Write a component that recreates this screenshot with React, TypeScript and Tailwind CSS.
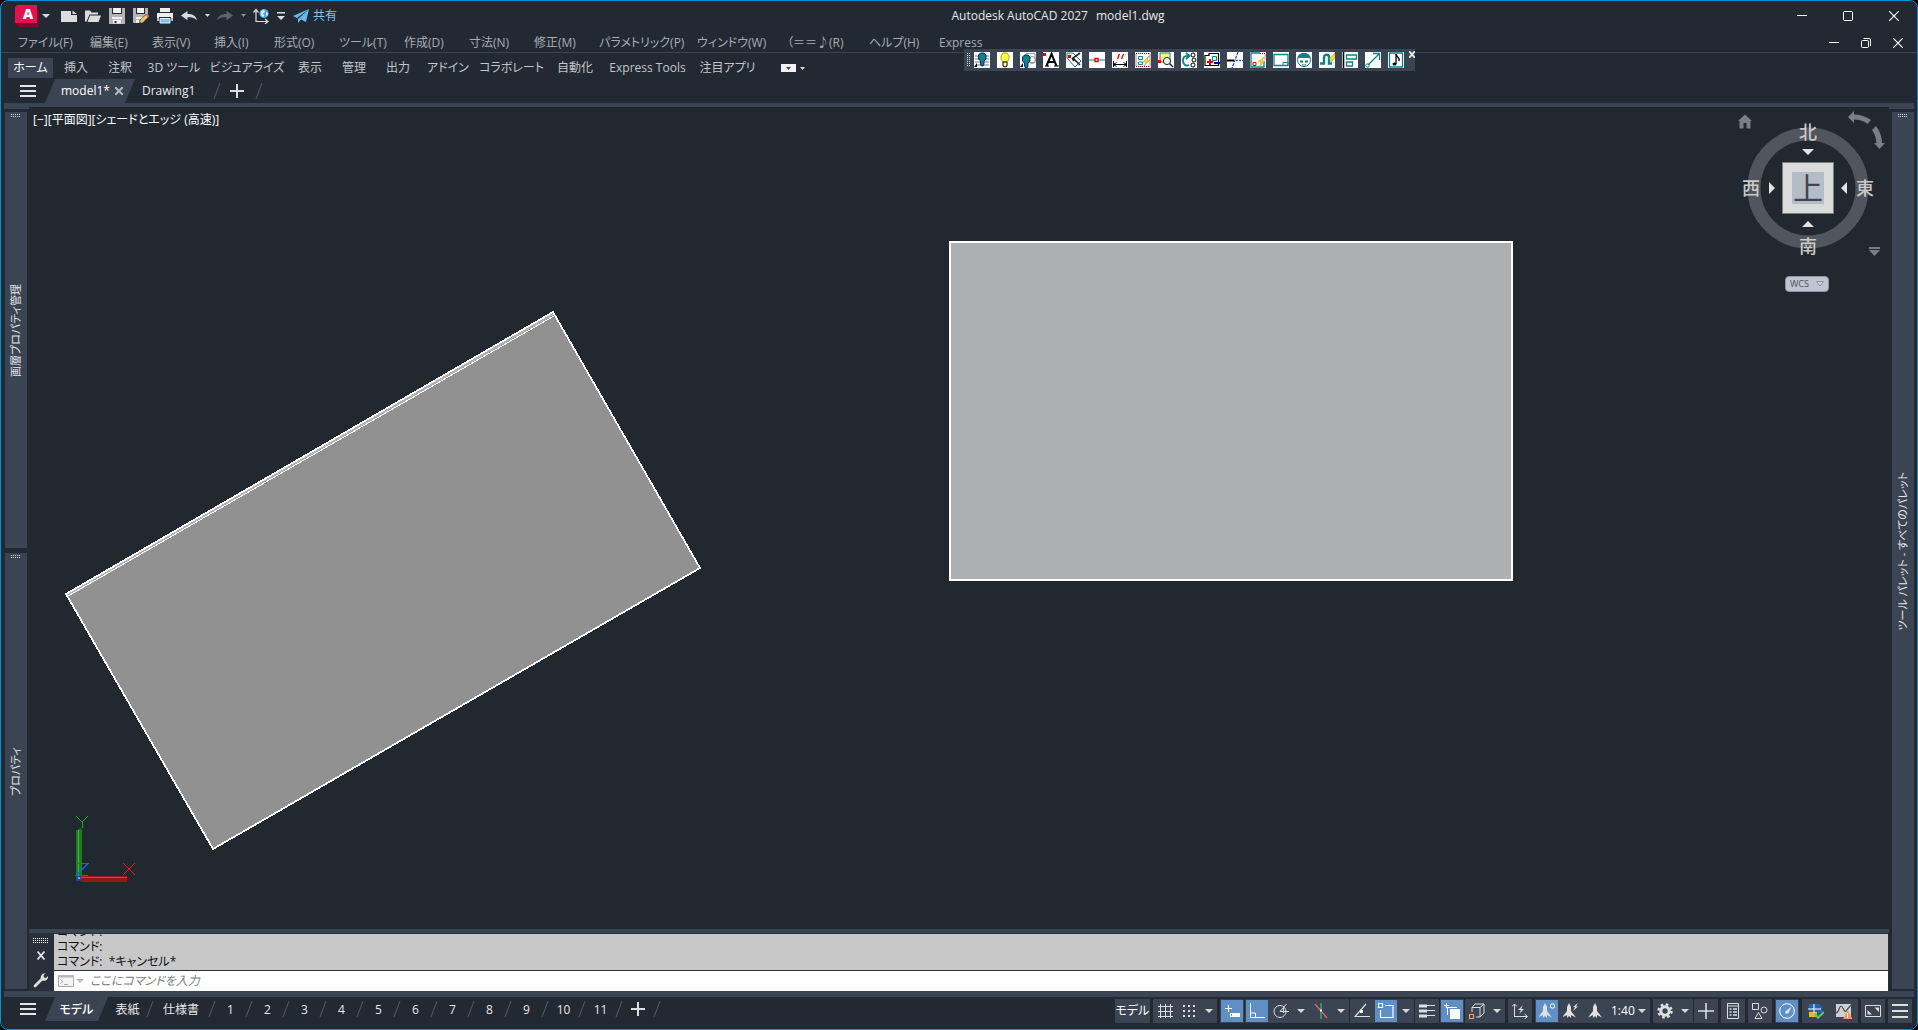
import React from 'react';

type Kids = { children?: React.ReactNode };

const Ico = ({ children, size = 16, className = '' }: Kids & { size?: number; className?: string }) => (
    <svg width={size} height={size} viewBox="0 0 16 16" fill="none" className={className} aria-hidden="true">
        {children}
    </svg>
);

const Caret = ({ className = 'text-[#d9d9d9]' }: { className?: string }) => (
    <svg width="8" height="4" viewBox="0 0 8 4" className={className} aria-hidden="true">
        <path d="M0 0h8L4 4z" fill="currentColor" />
    </svg>
);

const Burger = () => (
    <svg width="16" height="12" viewBox="0 0 16 12" aria-hidden="true">
        <path d="M0 1h16M0 6h16M0 11h16" stroke="#e4e4e4" strokeWidth="2" />
    </svg>
);

const PlusIcon = () => (
    <svg width="14" height="14" viewBox="0 0 14 14" aria-hidden="true">
        <path d="M7 0v14M0 7h14" stroke="#dedede" strokeWidth="2" />
    </svg>
);

const Slash = () => (
    <svg width="8" height="16" viewBox="0 0 8 16" className="shrink-0" aria-hidden="true">
        <path d="M1 16L7 0" stroke="#4a5262" strokeWidth="1.2" />
    </svg>
);

const Grip = ({ cols = 5, rows = 2, color = '#d5d8dc' }: { cols?: number; rows?: number; color?: string }) => (
    <svg width={cols * 2} height={rows * 2} shapeRendering="crispEdges" aria-hidden="true">
        {Array.from({ length: cols * rows }, (_, i) => (
            <rect key={i} x={(i % cols) * 2} y={Math.floor(i / cols) * 2} width="1" height="1" fill={color} />
        ))}
    </svg>
);

/* ---------- title bar ---------- */

const QUICK_ACCESS = [
    {
        name: '新規作成',
        icon: <path d="M-.5 3H10v4h6v7H-.5zM11.500 2.500l4.500 3.500h-4.500z" fill="#dcdcdc" />,
    },
    {
        name: '開く',
        icon: (
            <path d="M0 2.500h5l1.500 2H13v2H4.500L1.500 13.500H0zM5 7.500h11l-2.500 6.500H2.500z" fill="#dcdcdc" />
        ),
    },
    {
        name: '上書き保存',
        icon: (
            <>
                <path d="M0 0h3v6h10V0h3v16H0z" fill="#b4b4b4" />
                <path d="M4 0h8v5H4zM3 9h10v2H3zM4 12h8v3.500H4z" fill="#f2f2f2" />
                <path d="M5.500 13h2v2h-2z" fill="#222933" />
            </>
        ),
    },
    {
        name: '名前を付けて保存',
        icon: (
            <>
                <path d="M0 0h3v6h9V0h3v7L7 15H0z" fill="#b4b4b4" />
                <path d="M4 0h7v5H4zM3 9h7v2H3zM3 12h3v3H3z" fill="#f2f2f2" />
                <path d="M7 12l6-5.500 2.500 2.500-6 6H7z" fill="#f3c46b" stroke="#222933" strokeWidth=".6" />
                <path d="M12.500 7L14 5.500l2.500 2.500-1.500 1.500z" fill="#e8685e" />
            </>
        ),
    },
    {
        name: '印刷',
        icon: (
            <>
                <path d="M3 0h10v4H3zM0 5h16v7h-2V9H2v3H0z" fill="#eeeeee" />
                <path d="M0 10h2v3H0zM14 10h2v3h-2z" fill="#b4b4b4" />
                <path d="M3 10.500h10V15H3z" fill="#7cc3f5" stroke="#eee" />
            </>
        ),
    },
];

const UndoPath = ({ fill }: { fill: string }) => (
    <path d="M0 7.500L6.500 3v3c5 0 8.500 1.500 9.500 6.500C13.500 9.700 11 9.300 6.500 9.300v3z" fill={fill} />
);

const TitleBar = () => (
    <header className="flex h-[29px] shrink-0 items-center">
        <button aria-label="アプリケーション メニュー" className="ml-[14px] flex h-full w-[42px] items-center gap-[3px]">
            <svg width="24" height="22" viewBox="0 0 24 22" aria-hidden="true">
                <path d="M3 5h21v17H4l-4-3z" fill="#7d0a2b" />
                <path d="M0 2l2-2h20v18H0z" fill="#e51050" />
                <text x="13" y="14" textAnchor="middle" fontFamily="Open Sans" fontSize="14" fontWeight="800" fill="#fff">A</text>
            </svg>
            <Caret />
        </button>
        {QUICK_ACCESS.map((q) => (
            <button key={q.name} aria-label={q.name} className="flex h-6 w-6 items-center justify-center">
                <Ico>{q.icon}</Ico>
            </button>
        ))}
        <button aria-label="元に戻す" className="flex h-6 w-6 items-center justify-center"><Ico><UndoPath fill="#dcdcdc" /></Ico></button>
        <button aria-label="元に戻す履歴" className="flex h-6 w-3 items-center justify-center"><svg width="5" height="3" aria-hidden="true"><path d="M0 0h5L2.500 3z" fill="#dcdcdc" /></svg></button>
        <button aria-label="やり直し" className="flex h-6 w-6 items-center justify-center"><Ico className="-scale-x-100"><UndoPath fill="#5c636e" /></Ico></button>
        <button aria-label="やり直し履歴" className="flex h-6 w-3 items-center justify-center"><svg width="5" height="3" aria-hidden="true"><path d="M0 0h5L2.500 3z" fill="#8b9098" /></svg></button>
        <button aria-label="UCS" className="flex h-6 w-6 items-center justify-center">
            <Ico>
                <path d="M3 14V2M0.500 4.500L3 1.500l2.500 3M3 13.500h12M12 11l3 2.500-3 2.500" stroke="#dcdcdc" strokeWidth="1.2" />
                <circle cx="11" cy="5.500" r="4.600" fill="#4aa8e8" />
                <path d="M8 3l3-1.500 1 2-2 2 1.500 2.500-1.500 1C8 8 7 6 8 3zM13 4l2 1-.5 3-1.500-1z" fill="#d8effd" />
            </Ico>
        </button>
        <button aria-label="クイック アクセス ツールバーをカスタマイズ" className="flex h-6 w-4 items-center justify-center">
            <svg width="8" height="8" aria-hidden="true"><path d="M0 0h8v1.500H0zM0 4h8L4 8z" fill="#dcdcdc" /></svg>
        </button>
        <button className="flex h-6 items-center gap-1 pl-1 text-xs text-[#7cc3f5]">
            <Ico>
                <path d="M16 1L0 8l4 2zM16 1L5 11v4l2.500-3zM16 1l-3 13-5-2.500z" fill="#69b9ee" />
            </Ico>
            共有
        </button>
        <h1 className="flex flex-1 justify-center gap-2 text-xs text-[#e8e8e8]">
            <span>Autodesk AutoCAD 2027</span>
            <span>model1.dwg</span>
        </h1>
        <button aria-label="最小化" className="flex h-full w-[46px] items-center justify-center">
            <svg width="10" height="10" aria-hidden="true"><path d="M0 4.500h10" stroke="#fff" /></svg>
        </button>
        <button aria-label="最大化" className="flex h-full w-[46px] items-center justify-center">
            <svg width="10" height="10" aria-hidden="true"><rect x=".5" y=".5" width="9" height="9" rx="1" stroke="#fff" fill="none" /></svg>
        </button>
        <button aria-label="閉じる" className="flex h-full w-[46px] items-center justify-center">
            <svg width="10" height="10" aria-hidden="true"><path d="M0 0l10 10M10 0L0 10" stroke="#fff" strokeWidth="1.2" /></svg>
        </button>
    </header>
);

/* ---------- menus and tabs ---------- */

const MENUS = [
    { label: 'ファイル(F)', w: 'w-[72px]' },
    { label: '編集(E)', w: 'w-[62px]' },
    { label: '表示(V)', w: 'w-[62px]' },
    { label: '挿入(I)', w: 'w-[60px]' },
    { label: '形式(O)', w: 'w-[65px]' },
    { label: 'ツール(T)', w: 'w-[65px]' },
    { label: '作成(D)', w: 'w-[65px]' },
    { label: '寸法(N)', w: 'w-[65px]' },
    { label: '修正(M)', w: 'w-[65px]' },
    { label: 'パラメトリック(P)', w: 'w-[98px]' },
    { label: 'ウィンドウ(W)', w: 'w-[90px]' },
    { label: '（＝＝♪(R)', w: 'w-[82px]' },
    { label: 'ヘルプ(H)', w: 'w-[70px]' },
    { label: 'Express', w: 'w-[60px]' },
];

const MenuBar = () => (
    <nav className="flex h-[23px] shrink-0 items-center border-b border-[#3b4453] pt-[3px] pr-[3px] pl-[17px] text-xs text-[#a9adb3]">
        {MENUS.map((m) => (
            <button key={m.label} className={`${m.w} shrink-0 text-left whitespace-nowrap`}>{m.label}</button>
        ))}
        <div className="ml-auto flex h-full">
            <button aria-label="図面を最小化" className="flex w-8 items-center justify-center">
                <svg width="10" height="10" aria-hidden="true"><path d="M0 4.500h10" stroke="#fff" /></svg>
            </button>
            <button aria-label="図面を元に戻す" className="flex w-8 items-center justify-center">
                <svg width="10" height="10" fill="none" aria-hidden="true">
                    <rect x=".5" y="2.500" width="7" height="7" rx="1" stroke="#fff" />
                    <path d="M2.500.5H8a1.500 1.500 0 011.500 1.500v6" stroke="#fff" />
                </svg>
            </button>
            <button aria-label="図面を閉じる" className="flex w-8 items-center justify-center">
                <svg width="10" height="10" aria-hidden="true"><path d="M0 0l10 10M10 0L0 10" stroke="#fff" strokeWidth="1.2" /></svg>
            </button>
        </div>
    </nav>
);

const RIBBON_TABS = [
    { label: '挿入', w: 'w-11' },
    { label: '注釈', w: 'w-11' },
    { label: '3D ツール', w: 'w-16' },
    { label: 'ビジュアライズ', w: 'w-[82px]' },
    { label: '表示', w: 'w-11' },
    { label: '管理', w: 'w-11' },
    { label: '出力', w: 'w-11' },
    { label: 'アドイン', w: 'w-14' },
    { label: 'コラボレート', w: 'w-[71px]' },
    { label: '自動化', w: 'w-14' },
    { label: 'Express Tools', w: 'w-[89px]' },
    { label: '注目アプリ', w: 'w-[71px]' },
];

const RibbonTabs = () => (
    <nav className="flex h-[26px] shrink-0 items-center pt-1 pl-[7px] text-xs text-[#c3c6ca]">
        <button className="mr-[1px] h-5 w-[45px] shrink-0 bg-[#3b4453] text-white">ホーム</button>
        {RIBBON_TABS.map((t) => (
            <button key={t.label} className={`${t.w} shrink-0 text-center whitespace-nowrap`}>{t.label}</button>
        ))}
        <button aria-label="リボンを最小化" className="ml-[18px] flex h-2 w-[15px] items-center justify-center bg-[#f2f2f2]">
            <svg width="5" height="3" aria-hidden="true"><path d="M0 0h5L2.500 3z" fill="#444" /></svg>
        </button>
        <button aria-label="リボン オプション" className="ml-1 flex h-2 w-[5px] items-center">
            <svg width="5" height="3" aria-hidden="true"><path d="M0 0h5L2.500 3z" fill="#dcdcdc" /></svg>
        </button>
    </nav>
);

const FileTabs = () => (
    <nav className="flex h-6 shrink-0 items-center text-xs text-[#e8e8e8]">
        <button aria-label="ファイル タブ メニュー" className="ml-[19px] w-4"><Burger /></button>
        <div className="ml-[9px] flex h-6 w-[90px] items-center bg-[#3b4453] pl-4 [clip-path:polygon(10px_0,100%_0,calc(100%-10px)_100%,0_100%)]">
            <button className="font-medium text-white">model1*</button>
            <button aria-label="model1 を閉じる" className="mr-3 ml-auto text-[#b4b8be]">
                <svg width="8" height="8" aria-hidden="true"><path d="M0 0l8 8M8 0L0 8" stroke="currentColor" strokeWidth="2" /></svg>
            </button>
        </div>
        <button className="ml-[7px] w-[71px] text-left">Drawing1</button>
        <Slash />
        <button aria-label="新しい図面" className="mr-[11px] ml-[9px]"><PlusIcon /></button>
        <Slash />
    </nav>
);

/* ---------- floating tool bar ---------- */

const Bulb = ({ fill = '#0b8484' }: { fill?: string }) => (
    <path d="M4.500 3l2-2h3.500l2 2v4l-2 2v3l-1 2H7.500l-1-2V9l-2-2z" fill={fill} stroke="#00006b" strokeWidth=".8" />
);

const TOOLS = [
    { name: '画層をオフ', icon: <><path d="M1 4h14M1 7h14M1 10h14M3 13h12" stroke="#777" /><Bulb /><path d="M0 15l3-4v4z" fill="#000" /></> },
    { name: '全画層オン', icon: <><path d="M4 4l2-3h4l2 3v3l-2 3H6L4 7z" fill="#ffff4d" stroke="#b0a800" /><path d="M6 10h4v4l-2 1-2-1z" fill="#ffffa0" stroke="#000" /></> },
    { name: '画層選択表示', icon: <><path d="M6 1.500h9v9H6z" stroke="#999" /><circle cx="12" cy="8" r="3.500" stroke="#999" /><g transform="translate(-2 2)"><Bulb /></g><path d="M0 15l3-4v4z" fill="#000" /></> },
    { name: '文字', icon: <><path d="M3.500 14L8.500 2l5 12M5 10h7" stroke="#000" strokeWidth="2" /><path d="M2 14h4M11 14h5" stroke="#000" /><path d="M0 1h3v3H0z" fill="#e00" /></> },
    { name: '測定', icon: <><path d="M1 1h6l8 8-6 6-8-9z" stroke="#0b8484" /><path d="M14 1L7 6l7 7M6 6l2 3" stroke="#222" strokeWidth="1.600" /><path d="M2 3h3v3H2z" fill="#e00" /></> },
    { name: '中点', icon: <><path d="M0 8h16" stroke="#0b8484" /><path d="M6 6.500h3v3H6z" fill="#fff" stroke="#e00" strokeWidth="1.400" /></> },
    { name: '寸法', icon: <><path d="M1.500 9v6M14.500 9v6M2 12.500h12M4.500 10.500l-3 2 3 2M11.500 10.500l3 2-3 2" stroke="#000" /><path d="M5.500 7l2-5M9.500 7l2-5" stroke="#e00" strokeWidth="1.300" /></> },
    { name: '選択', icon: <><rect x="1" y="1.500" width="14" height="13" stroke="#900" strokeDasharray="1 1" /><path d="M3.500 4.500h4v3h-4zM3.500 10h4v2.500h-4z" stroke="#0b8484" /><path d="M15 3l-7 7h3l-2 4 6-6h-3z" fill="#f5e400" stroke="#888" strokeWidth=".4" /></> },
    { name: 'ズーム', icon: <><path d="M2 1h10v9H2z" fill="#fff37a" stroke="#0b8484" /><circle cx="9" cy="9" r="3.600" fill="#e8f4f4" stroke="#222" /><path d="M11.500 11.500L15 15" stroke="#222" strokeWidth="1.500" /><path d="M0 8h3v3H0z" fill="#e00" /></> },
    { name: '回転', icon: <><path d="M8 4C3 3 1.500 6 2 9.500s3.500 5 6 3.500M5 1l3.500 3L5 7" stroke="#0b8484" strokeWidth="1.800" /><circle cx="12" cy="3" r="2" stroke="#000" /><circle cx="13" cy="8" r="2" stroke="#000" /><circle cx="12" cy="13" r="2" stroke="#000" /></> },
    { name: 'ブロック', icon: <><path d="M1 13.500V3.500h4v-2h9.500v12z" stroke="#000" strokeWidth="1.200" /><path d="M8.500 4.500h4v4h-4z" stroke="#0b8484" /><path d="M6 7v6M3 10h6" stroke="#e00" strokeWidth="2" /><path d="M10 11h6" stroke="#00c" strokeWidth="2" /></> },
    { name: 'トリム', icon: <><path d="M0 8.500h7" stroke="#000" strokeWidth="2" /><path d="M9 8.500h7" stroke="#0b8484" strokeDasharray="2 1" strokeWidth="1.500" /><path d="M11 0L5 16" stroke="#00c" strokeDasharray="3 1" /></> },
    { name: '編集', icon: <><path d="M10 1H1v14h13V9" stroke="#0b8484" strokeWidth="1.300" /><path d="M10 1.500h5V8" stroke="#e00" strokeDasharray="1 1" /><path d="M14 5l-6 5h3l-2 5 6-6h-3z" fill="#f5e400" stroke="#888" strokeWidth=".4" /><path d="M3 10.500h3v3H3z" stroke="#e00" /></> },
    { name: 'ビューポート', icon: <><path d="M1 2.500h14v11H1z" stroke="#0b8484" strokeWidth="1.300" /><path d="M10 10.500h5v3h-5z" stroke="#0b8484" /></> },
    { name: 'ロボット', icon: <><circle cx="8" cy="8" r="6.500" fill="#fff" stroke="#0b8484" /><path d="M1.500 6a6.500 5 0 0113 0z" fill="#0b8484" /><path d="M4 8.500h3v2H4zM9 8.500h3v2H9z" fill="#0b8484" /><path d="M6 13h4" stroke="#0b8484" /></> },
    { name: 'スナップ', icon: <><path d="M1 11.500h4V5c0-3 5-3 5 0v6.500h3" stroke="#0b8484" strokeWidth="2.400" /><path d="M16 1l-6 6h3l-2 4 5-5z" fill="#f5e400" stroke="#888" strokeWidth=".4" /></> },
    { name: '位置合わせ', icon: <><path d="M1.500 0v16" stroke="#000" strokeWidth="1.600" /><path d="M4.500 3h10v4h-10zM4.500 10h6v4h-6z" stroke="#0b8484" strokeWidth="1.300" /></> },
    { name: '引出', icon: <><path d="M3 13L14 2M8 1.500h6.500V8" stroke="#0b8484" strokeWidth="1.300" /><circle cx="2.500" cy="13.500" r="1.700" stroke="#0b8484" /></> },
    { name: '音符', icon: <><path d="M1.500 1v14h13V1z" stroke="#0b8484" strokeWidth="1.300" /><path d="M8 12V2c0 3 4 3 3 7" stroke="#000" strokeWidth="1.300" /><ellipse cx="6.500" cy="12" rx="2" ry="1.600" fill="#000" /></> },
];

const FloatingTools = () => (
    <div role="toolbar" className="absolute top-12 left-[963px] flex h-[22px] w-[451px] items-center bg-[#3b4453]">
        <span className="mr-[3px] ml-[3px]"><Grip cols={2} rows={7} /></span>
        <div className="mb-px flex gap-[7px]">
            {TOOLS.map((t) => (
                <button key={t.name} aria-label={t.name} className="h-4 w-4 bg-white">
                    <Ico>{t.icon}</Ico>
                </button>
            ))}
        </div>
        <button aria-label="ツールバーを閉じる" className="mt-0.5 ml-auto self-start">
            <svg width="6" height="7" aria-hidden="true"><path d="M0 0l6 7M6 0L0 7" stroke="#e8e8e8" strokeWidth="1.800" /></svg>
        </button>
    </div>
);

/* ---------- workspace ---------- */

const Palette = ({ title }: { title: string }) => (
    <aside className="flex w-[22px] flex-1 flex-col items-center bg-[#3b4453] pt-0.5">
        <Grip />
        <div className="flex flex-1 items-center pb-1">
            <button className="rotate-180 text-[11px] leading-4 whitespace-nowrap text-[#e4e6e8] [text-orientation:sideways] [writing-mode:vertical-rl]">
                {title}
            </button>
        </div>
    </aside>
);

const Compass = ({ x, y, children }: { x: number; y: number; children: string }) => (
    <text x={x} y={y} textAnchor="middle" fontSize="18" fontWeight="500" fill="#c9cac6">{children}</text>
);

const ViewCube = () => (
    <div className="absolute top-0 right-0 w-[154px]">
        <svg width="154" height="164" viewBox="0 0 154 164" fill="none" aria-label="ViewCube">
            <circle cx="73" cy="81" r="54" stroke="#50555e" strokeWidth="13" />
            <path d="M10 7.500l7 6.500h-1.500v7.500h-4V16h-3v5.500h-4V14H3z" fill="#7b7e83" />
            <path d="M113 10l6-6v3.500c6 0 12 2 17 5.500l-3.500 4C129 14 125 12.500 119 12.500V16z" fill="#7b7e83" />
            <path d="M141 19l-4 4c3 4 4 8 4.500 13H139l5.500 6 5.500-6h-3c0-6-2-12-6-17z" fill="#7b7e83" />
            <path d="M134 140h11v2h-11zM134 143h11l-5.500 6z" fill="#7b7e83" />
            <rect x="47.500" y="55.500" width="51" height="51" fill="#dadcdb" stroke="#7f8080" />
            <rect x="57" y="65" width="32" height="32" fill="#b4bcc8" />
            <text x="73" y="92" textAnchor="middle" fontSize="30" fill="#3f4650">上</text>
            <path d="M67 42h12l-6 6zM67 120h12l-6-6zM34 75v12l6-6zM112 75v12l-6-6z" fill="#e3e3e3" />
            <Compass x={73} y={32}>北</Compass>
            <Compass x={73} y={146}>南</Compass>
            <Compass x={16} y={88}>西</Compass>
            <Compass x={130} y={88}>東</Compass>
        </svg>
        <button className="mt-[5px] ml-[50px] flex h-4 w-11 items-center justify-between rounded border border-[#9093a3] bg-[#c0c3d2] px-1 text-[9px] leading-3 text-[#4d515c]">
            WCS
            <svg width="8" height="6" aria-hidden="true"><path d="M.5.5h7L4 5z" fill="#d4d6e0" stroke="#8a8d9a" /></svg>
        </button>
    </div>
);

const Drawing = () => (
    <svg className="absolute inset-0 h-full w-full" fill="none" aria-label="model1">
        <g shapeRendering="crispEdges">
            <path d="M524 205L671 461L184 742L37 487z" fill="#919191" />
            <path d="M524 205L37 487l2 3 486-282z" fill="#b0b0b0" />
            <path d="M39 489L525 209" stroke="#fff" />
            <path d="M524 205L671 461L184 742L37 487z" stroke="#fff" strokeWidth="1.800" />
        </g>
        <rect x="921" y="135" width="562" height="338" fill="#aeafb1" stroke="#fff" strokeWidth="2" />
        <g shapeRendering="crispEdges">
            <path d="M47 723h6v49h-6z" fill="#1d7d1d" />
            <path d="M49 723h1v49h-1z" fill="#4db04d" />
            <path d="M48 723l2-2h1l2 2z" fill="#1a641a" />
            <path d="M52 769h46v6H52z" fill="#941818" />
            <path d="M52 770h46v1H52z" fill="#c94444" />
            <path d="M98 769l3 3-3 3z" fill="#6d1010" />
            <path d="M47 768h5v6h-5z" fill="#1747a0" />
            <path d="M49 770h2v2h-2z" fill="#69a5ff" />
        </g>
        <g shapeRendering="crispEdges">
            <path d="M47 709l6 6 6-6M53.500 715v6" stroke="#14b014" />
            <path d="M94 756l12 12M106 756l-12 12" stroke="#e81e1e" />
            <path d="M47 756.500h12L47 768.500h12" stroke="#1264e8" />
        </g>
    </svg>
);

const CommandLine = () => (
    <section className="flex h-[62px] shrink-0 border-t-4 border-[#3b4453] bg-[#292f3b]">
        <div className="mr-px flex w-6 flex-col items-center pt-[5px]">
            <Grip cols={8} rows={3} color="#ffffff" />
            <button aria-label="コマンド ラインを閉じる" className="mt-[7px]">
                <svg width="8" height="9" aria-hidden="true"><path d="M.5.5l7 8M7.500.5l-7 8" stroke="#e0e0e0" strokeWidth="1.800" /></svg>
            </button>
            <button aria-label="カスタマイズ" className="mt-3">
                <Ico>
                    <path d="M2 14l7-7" stroke="#e0e0e0" strokeWidth="2.800" strokeLinecap="round" />
                    <path d="M8 7.500C7 4 9 1 12.500 1.200L10.500 3.500l.5 2 2 .5L15 4c.5 3.500-2.500 5.500-6 4.500z" fill="#e0e0e0" />
                </Ico>
            </button>
        </div>
        <div className="flex min-w-0 flex-1 flex-col pt-px pr-px text-xs">
            <div className="flex h-[37px] flex-col justify-end overflow-hidden bg-[#c8c8c8] pb-px pl-[3px] leading-[15px] text-[#111]">
                <p className="shrink-0">コマンド:</p>
                <p className="shrink-0">コマンド:</p>
                <p className="shrink-0">コマンド: &nbsp;*キャンセル*</p>
            </div>
            <div className="mt-px flex h-5 items-center bg-white pl-1">
                <button aria-label="最近使用したコマンド" className="flex items-center gap-0.5">
                    <svg width="16" height="12" viewBox="0 0 16 12" fill="none" aria-hidden="true">
                        <path d="M.5.5h15v11H.5z" fill="#f4f4f4" stroke="#a9a9a9" />
                        <path d="M0 0h16v2.500H0z" fill="#b9b9b9" />
                        <path d="M2.500 4.500l2.500 2-2.500 2M6 9.500h4" stroke="#a9a9a9" />
                    </svg>
                    <Caret className="text-[#b9b9b9]" />
                </button>
                <input
                    aria-label="コマンド"
                    placeholder="ここにコマンドを入力"
                    className="ml-1.5 min-w-0 flex-1 bg-transparent italic outline-none placeholder:text-[#808080]"
                />
            </div>
        </div>
    </section>
);

/* ---------- bottom bar ---------- */

const LAYOUTS = ['1', '2', '3', '4', '5', '6', '7', '8', '9', '10', '11'];

const LayoutTabs = () => (
    <nav className="flex h-6 items-center text-xs text-[#e8e8e8]">
        <button aria-label="レイアウト メニュー" className="ml-[19px] w-4"><Burger /></button>
        <button className="ml-[9px] h-6 w-[63px] bg-[#3b4453] pt-0.5 text-center font-medium text-white [clip-path:polygon(10px_0,100%_0,calc(100%-10px)_100%,0_100%)]">
            モデル
        </button>
        <button className="ml-px w-[37px] pt-0.5 text-center whitespace-nowrap">表紙</button>
        <Slash />
        <button className="w-[54px] pt-0.5 text-center whitespace-nowrap">仕様書</button>
        <Slash />
        {LAYOUTS.map((n) => (
            <React.Fragment key={n}>
                <button className="w-[29px] pt-0.5 text-center">{n}</button>
                <Slash />
            </React.Fragment>
        ))}
        <button aria-label="新しいレイアウト" className="mx-2"><PlusIcon /></button>
        <Slash />
    </nav>
);

const Group = ({ children }: Kids) => <div className="flex h-6 items-center bg-[#3b4453]">{children}</div>;

const Tool = ({ name, on, children }: Kids & { name: string; on?: boolean }) => (
    <button
        aria-label={name}
        aria-pressed={!!on}
        className={`flex h-6 w-6 items-center justify-center border border-[#3b4453] ${on ? 'bg-[#5f8fc4]' : ''}`}
    >
        <Ico className="shrink-0">{children}</Ico>
    </button>
);

const Drop = ({ name }: { name: string }) => (
    <button aria-label={name} className="flex h-6 w-4 items-center justify-center"><Caret /></button>
);

const S = '#dedede';

const Scale = () => <path d="M8 0l2 4v4l5 6.500-5-2.500v3L8 13l-2 2v-3l-5 2.500L6 8V4z" fill="#e0e0e0" />;

const StatusBar = () => (
    <div className="ml-auto flex gap-[3px] pt-0.5 pr-[5px] text-xs text-white">
        <Group><button className="w-[35px] text-center whitespace-nowrap">モデル</button></Group>
        <Group>
            <Tool name="グリッド"><path d="M3.500 1v14M8.500 1v14M13.500 1v14M1 3.500h15M1 8.500h15M1 13.500h15" stroke={S} /></Tool>
            <Tool name="スナップ"><path d="M2 3h12M2 8h12M2 13h12" stroke={S} strokeWidth="2" strokeDasharray="2 3" /></Tool>
            <Drop name="スナップ設定" />
        </Group>
        <div className="flex gap-px">
            <Group>
                <Tool name="ダイナミック入力" on><path d="M1 5.500h7M4.500 2v7" stroke="#fff" /><path d="M6 10h10v4H6z" fill="#fff" /><path d="M7.500 11v2" stroke="#5f8fc4" /></Tool>
            </Group>
            <Group>
                <Tool name="直交モード" on><path d="M1.500 0v14.500H16M1.500 10h5v4.500" stroke="#fff" /></Tool>
                <Tool name="極トラッキング"><circle cx="7" cy="8.500" r="6" stroke={S} /><path d="M7 8.500h9M7 8.500L13.500 1M10.500 5v5" stroke={S} /></Tool>
                <Drop name="極トラッキング設定" />
                <Tool name="アイソメ"><path d="M8 0v16" stroke="#54c878" /><path d="M2 1l5 6M9 9l5 6" stroke="#e06a6a" strokeWidth="1.200" /><path d="M7 6.500h2v2H7z" fill="#fff" /></Tool>
                <Drop name="アイソメ設定" />
            </Group>
            <Group>
                <Tool name="オブジェクト スナップ トラッキング"><path d="M12 1L1 13.500h15" stroke={S} strokeWidth="1.200" /><path d="M6 7h3v3H6z" fill="#fff" /></Tool>
                <Tool name="オブジェクト スナップ" on><path d="M7 2.500h8v12H2.500V7M.5.5h4v4h-4z" stroke="#fff" strokeWidth="1.200" /></Tool>
                <Drop name="オブジェクト スナップ設定" />
            </Group>
            <Group><Tool name="線の太さ"><path d="M0 3h8M0 8h8M0 13h8" stroke={S} strokeWidth="3" /><path d="M8 2.500h8M8 7.500h8M8 12.500h8" stroke={S} /></Tool></Group>
            <Group><Tool name="透過性" on><path d="M0 2.500h5M2.500 0v5" stroke="#fff" /><path d="M3.500 12V4.500H13" stroke="#fff" /><path d="M6 6h10v10H6z" fill="#fff" /></Tool></Group>
            <Group>
                <Tool name="3D オブジェクト スナップ"><path d="M3 9V4.500h8V14H7M3 4.500L6 1h9v9l-4 4M11 4.500L15 1" stroke={S} /><path d="M.5 11.500h4v4h-4z" stroke="#f0a070" strokeWidth="1.200" /></Tool>
                <Drop name="3D オブジェクト スナップ設定" />
            </Group>
        </div>
        <Group><Tool name="ダイナミック UCS"><path d="M2.500 14V1M0 3.500L2.500 1 5 3.500M2 13.500h13M12.500 11l3 2.500-3 2.500" stroke={S} /><path d="M11 2L6 7h3l-2 4 5-5H9z" fill={S} /></Tool></Group>
        <Group>
            <Tool name="注釈オブジェクトを表示" on><g transform="translate(-2 0)"><Scale /></g><circle cx="13.500" cy="3" r="2.200" stroke="#fff" /></Tool>
            <Tool name="尺度を追加"><g transform="translate(-2 0)"><Scale /></g><path d="M15 0l-5 4h2l-2 4 5-4.500h-2z" fill={S} /></Tool>
            <Tool name="注釈尺度"><Scale /></Tool>
            <button className="flex h-6 w-[43px] items-center justify-between px-1">1:40 <Caret /></button>
        </Group>
        <div className="flex gap-px">
            <Group>
                <Tool name="ワークスペース">
                    <circle cx="8" cy="8" r="4.200" stroke={S} strokeWidth="3" />
                    <circle cx="8" cy="8" r="6.500" stroke={S} strokeWidth="2.500" strokeDasharray="2.600 2.505" />
                </Tool>
                <Drop name="ワークスペース切り替え" />
            </Group>
            <Group><Tool name="注釈モニター"><path d="M8 0v16M0 8h16" stroke={S} strokeWidth="1.600" /></Tool></Group>
        </div>
        <Group><Tool name="クイック プロパティ"><path d="M2.500.5h11v15h-11zM2.500 3h11" stroke={S} /><path d="M4.500 6h2M8 6h4M4.500 9h2M8 9h4M4.500 12h2M8 12h4" stroke={S} strokeWidth="1.500" /></Tool></Group>
        <Group><Tool name="オブジェクトを選択表示"><path d="M.5.5h6v6h-6zM3 15.500h7L6.500 9.500z" stroke={S} /><circle cx="12" cy="7" r="3" stroke={S} /></Tool></Group>
        <Group><Tool name="グラフィックス パフォーマンス" on><circle cx="8" cy="8" r="7.300" stroke="#fff" /><path d="M12.500 3.500L9.500 10 7 11 6 9z" fill="#fff" fillOpacity=".8" /></Tool></Group>
        <Group>
            <div className="flex gap-1 px-0.5">
                <Tool name="信頼されたDWG">
                    <path d="M1 1h10l3 3v6H1z" fill="#2b63a8" />
                    <path d="M1 9h8v5H1z" fill="#f0b429" />
                    <path d="M0 6h13M6 1v9" stroke="#fff" />
                    <path d="M7 11l3 3.500 6-5.500" stroke="#58c46c" strokeWidth="2.200" />
                </Tool>
                <Tool name="アクティビティ">
                    <path d="M0 1h15v13H0z" fill="#cfd0d2" />
                    <path d="M0 10c3 0 3-7 5-7s3 7 5 5l5-6" stroke="#4a4f58" strokeWidth="1.200" />
                    <path d="M11.500 7l5 9h-9.500z" fill="#ef9a66" />
                    <path d="M11.500 10v5" stroke="#fff" />
                </Tool>
            </div>
        </Group>
        <Group><Tool name="フルスクリーン"><path d="M.5 2.500h15v11H.5z" stroke={S} /><path d="M9.500 4.500H14V9zM2.500 7v4.500H7z" fill={S} /></Tool></Group>
        <Group><Tool name="カスタマイズ"><path d="M0 2h16M0 8h16M0 14h16" stroke={S} strokeWidth="1.800" /></Tool></Group>
    </div>
);

export default function App() {
    return (
        <div className="h-screen bg-black font-['Open_Sans','Noto_Sans_CJK_JP',sans-serif] [font-feature-settings:'palt']">
            <div className="relative flex h-full flex-col overflow-hidden rounded-lg border border-[#0b8fd0] bg-[#222933]">
                <TitleBar />
                <MenuBar />
                <RibbonTabs />
                <FileTabs />
                <FloatingTools />
                <div className="mx-[3px] h-1 shrink-0 bg-[#3b4453]" />
                <main className="mx-[3px] flex min-h-0 flex-1">
                    <div className="flex w-[25px] shrink-0 flex-col items-start gap-[5px] border-t-2 border-[#3b4453] pt-[3px] pb-0.5 pl-px">
                        <Palette title="画層プロパティ管理" />
                        <Palette title="プロパティ" />
                    </div>
                    <div className="flex min-w-0 flex-1 flex-col bg-[#212830]">
                        <div className="relative min-h-0 flex-1 overflow-hidden">
                            <Drawing />
                            <div className="relative flex pt-[5px] pl-1 text-xs leading-4 text-white">
                                <button>[−]</button>
                                <button>[平面図]</button>
                                <button>[シェードとエッジ (高速)]</button>
                            </div>
                            <ViewCube />
                        </div>
                        <CommandLine />
                    </div>
                    <div className="flex w-[25px] shrink-0 flex-col items-end border-t-2 border-[#3b4453] pt-[3px] pb-0.5">
                        <Palette title="ツール パレット - すべてのパレット" />
                    </div>
                </main>
                <div className="mx-[3px] h-1.5 shrink-0 bg-[#3b4453]" />
                <footer className="flex h-8 shrink-0">
                    <LayoutTabs />
                    <StatusBar />
                </footer>
            </div>
        </div>
    );
}
